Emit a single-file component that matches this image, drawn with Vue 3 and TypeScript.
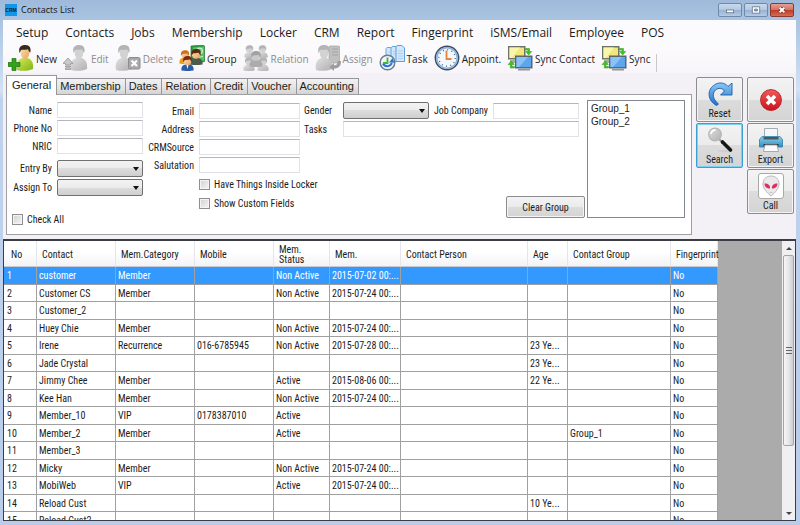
<script setup lang="ts">
import { ref } from 'vue'

interface Contact {
  no: number
  name: string
  category?: string
  mobile?: string
  status?: string
  mem?: string
  age?: string
  group?: string
}

interface Tool {
  icon: string
  label: string
  disabled?: boolean
}

const menus = ['Setup', 'Contacts', 'Jobs', 'Membership', 'Locker', 'CRM', 'Report', 'Fingerprint', 'iSMS/Email', 'Employee', 'POS']

const tools: Tool[] = [
  { icon: 'new', label: 'New' },
  { icon: 'edit', label: 'Edit', disabled: true },
  { icon: 'delete', label: 'Delete', disabled: true },
  { icon: 'group', label: 'Group' },
  { icon: 'relation', label: 'Relation', disabled: true },
  { icon: 'assign', label: 'Assign', disabled: true },
  { icon: 'task', label: 'Task' },
  { icon: 'clock', label: 'Appoint.' },
  { icon: 'sync', label: 'Sync Contact' },
  { icon: 'sync', label: 'Sync' },
]

const tabs = ['General', 'Membership', 'Dates', 'Relation', 'Credit', 'Voucher', 'Accounting']
const activeTab = ref('General')

const headers = ['No', 'Contact', 'Mem.Category', 'Mobile', 'Mem. Status', 'Mem.', 'Contact Person', 'Age', 'Contact Group', 'Fingerprint']

const contacts: Contact[] = [
  { no: 1, name: 'customer', category: 'Member', status: 'Non Active', mem: '2015-07-02 00:...' },
  { no: 2, name: 'Customer CS', category: 'Member', status: 'Non Active', mem: '2015-07-24 00:...' },
  { no: 3, name: 'Customer_2' },
  { no: 4, name: 'Huey Chie', category: 'Member', status: 'Non Active', mem: '2015-07-24 00:...' },
  { no: 5, name: 'Irene', category: 'Recurrence', mobile: '016-6785945', status: 'Non Active', mem: '2015-07-28 00:...', age: '23 Ye...' },
  { no: 6, name: 'Jade Crystal', age: '23 Ye...' },
  { no: 7, name: 'Jimmy Chee', category: 'Member', status: 'Active', mem: '2015-08-06 00:...', age: '22 Ye...' },
  { no: 8, name: 'Kee Han', category: 'Member', status: 'Non Active', mem: '2015-07-24 00:...' },
  { no: 9, name: 'Member_10', category: 'VIP', mobile: '0178387010', status: 'Active' },
  { no: 10, name: 'Member_2', category: 'Member', status: 'Active', group: 'Group_1' },
  { no: 11, name: 'Member_3' },
  { no: 12, name: 'Micky', category: 'Member', status: 'Non Active', mem: '2015-07-24 00:...' },
  { no: 13, name: 'MobiWeb', category: 'VIP', status: 'Active', mem: '2015-07-24 00:...' },
  { no: 14, name: 'Reload Cust', age: '10 Ye...' },
  { no: 15, name: 'Reload Cust2' },
]
const selectedNo = ref(1)
</script>

<template>
  <div class="window">
    <svg class="defs" width="0" height="0" aria-hidden="true">
      <defs>
        <linearGradient id="lime" x1="0" y1="0" x2="1" y2="1">
          <stop offset="0" stop-color="#d9ea5c" />
          <stop offset="1" stop-color="#7db512" />
        </linearGradient>
        <linearGradient id="silver" x1="0" y1="0" x2="1" y2="1">
          <stop offset="0" stop-color="#e0e0e0" />
          <stop offset="1" stop-color="#b0b0b0" />
        </linearGradient>
        <linearGradient id="skin" x1="0" y1="0" x2="1" y2="1">
          <stop offset="0" stop-color="#fde0b4" />
          <stop offset="1" stop-color="#e8a45c" />
        </linearGradient>
        <linearGradient id="azure" x1="0" y1="0" x2="0" y2="1">
          <stop offset="0" stop-color="#8cc8f5" />
          <stop offset="1" stop-color="#1f6fc8" />
        </linearGradient>
        <linearGradient id="teal" x1="0" y1="0" x2="0" y2="1">
          <stop offset="0" stop-color="#8fd0ea" />
          <stop offset="1" stop-color="#2f8fbf" />
        </linearGradient>
        <linearGradient id="ruby" x1="0" y1="0" x2="0" y2="1">
          <stop offset="0" stop-color="#ef5a5a" />
          <stop offset="1" stop-color="#c8141c" />
        </linearGradient>
        <symbol id="person" viewBox="0 0 18 26">
          <path class="body" d="M1 25C0 18 1.500 14.500 6.500 13h5c4.500 1.500 6 5 5.500 11-5 2-11 2.500-16 1z" />
          <path class="face" d="M4.500 6c0-6 9-6 9 0 0 5-2 8-4.500 8s-4.500-3-4.500-8z" />
          <path class="hair" d="M3.500 8C2 1 6 0 9.500 0c4 0 6 3 4.800 7.500C13 7 12.500 5 12 4.200 9 5 6 4.500 5 5c-.5 1-.7 2-1.500 3z" />
        </symbol>
        <symbol id="bust" viewBox="0 0 14 16">
          <path class="body" d="M.5 15.500C0 12 1.500 9.500 5 9h4c3.500.5 5 3 4.500 6.500-4 .8-9 .8-13 0z" />
          <circle class="face" cx="7" cy="5.500" r="4.200" />
          <path class="hair" d="M2.500 6.500C1.500 1.500 4 0 7.500 0s5 2.500 4 6.500C10.500 6 10.500 4.500 9.500 3.800 7.500 4.500 5 4 4 4.500c-.5.500-.7 1.300-1.500 2z" />
        </symbol>
      </defs>
    </svg>

    <header class="titlebar">
      <span class="logo">CRM</span>
      <h1>Contacts List</h1>
      <div class="controls">
        <button type="button" aria-label="Minimize"><svg viewBox="0 0 24 12"><rect x="8" y="6" width="8" height="3" fill="#fff" stroke="#54677f" stroke-width=".8" /></svg></button>
        <button type="button" aria-label="Maximize"><svg viewBox="0 0 24 12"><path fill="#fff" fill-rule="evenodd" stroke="#54677f" stroke-width=".8" d="M8 2.500h8v7H8zM10.500 5v2h3V5z" /></svg></button>
        <button type="button" class="close" aria-label="Close"><svg viewBox="0 0 24 12"><path d="M9.500 3.500l5 5m0-5l-5 5" stroke="#6b2a25" stroke-width="3.600" /><path d="M9.500 3.500l5 5m0-5l-5 5" stroke="#fff" stroke-width="2.200" /></svg></button>
      </div>
    </header>

    <div class="client">
      <nav class="menu">
        <a v-for="m in menus" :key="m" href="#">{{ m }}</a>
      </nav>

      <div class="toolbar">
        <button v-for="t in tools" :key="t.label" type="button" :disabled="t.disabled">
          <svg viewBox="0 0 26 26" aria-hidden="true">
            <template v-if="t.icon === 'new'">
              <use href="#person" class="green" x="8" y="0" width="18" height="26" />
              <path d="M4 13.500h4v4h4v4H8v4H4v-4H0v-4h4z" fill="#35a01c" stroke="#1c7410" stroke-width=".7" />
            </template>
            <template v-else-if="t.icon === 'edit'">
              <use href="#person" class="grey" x="7" y="0" width="18" height="26" />
              <path d="M5 13l5 5.500H7.500V20h-5v-1.500H0zM2.500 21h5v1h-5zM2.500 23h5v1.500h-5z" fill="#c9c9c9" stroke="#8f8f8f" stroke-width=".7" />
            </template>
            <template v-else-if="t.icon === 'delete'">
              <use href="#person" class="grey" x="0" y="0" width="18" height="26" />
              <rect x="13.500" y="12.500" width="11.500" height="11.500" rx="1.500" fill="#a9a9a9" stroke="#8c8c8c" />
              <path d="M16.500 15.500l5.500 5.500m0-5.500L16.500 21" stroke="#fff" stroke-width="2.200" />
            </template>
            <template v-else-if="t.icon === 'group'">
              <path d="M12 1l12-1 1.500 1v15.500L14 19l-2-1z" fill="#2c9a40" stroke="#1d7c33" stroke-width=".7" />
              <path d="M14 2.500l11-1v14l-11 2z" fill="#58c266" />
              <circle cx="20.500" cy="6" r="2.800" fill="none" stroke="#c9f0cc" stroke-width="1.300" />
              <path d="M18 12.500l6-1" stroke="#c9f0cc" />
              <use href="#bust" class="amber" x="0" y="5" width="12" height="14" />
              <use href="#bust" class="red" x="10" y="4" width="14" height="16" />
              <use href="#bust" class="blue" x="2" y="11" width="13" height="15" />
              <path d="M7.500 20l1 4 1-4z" fill="#fff" />
            </template>
            <template v-else-if="t.icon === 'relation'">
              <use href="#bust" class="grey" x="1" y="0" width="11" height="13" />
              <use href="#bust" class="grey" x="14" y="0" width="11" height="13" />
              <use href="#bust" class="grey" x="0" y="12" width="12" height="14" />
              <use href="#bust" class="grey" x="14" y="12" width="12" height="14" />
              <use href="#bust" class="ash" x="6" y="6" width="14" height="16" />
            </template>
            <template v-else-if="t.icon === 'assign'">
              <rect x="14" y="1" width="10.500" height="17" rx="1" fill="#c0c0c0" stroke="#a5a5a5" stroke-width=".7" />
              <path d="M17 4h6M17 7h6M17 10h6" stroke="#a4a4a4" />
              <use href="#person" class="grey" x="0" y="0" width="18" height="26" />
              <path d="M14.500 22l4.500-4v2.300c3 0 3.500-1.300 3.500-4.300H26c0 5.500-2.500 7.500-7 7.500V26z" fill="#9d9d9d" />
            </template>
            <template v-else-if="t.icon === 'task'">
              <path d="M7 3.500l1-1h4.500L15 5v12H7z" fill="#d4e8fc" stroke="#5b9edd" stroke-width=".9" />
              <path d="M12 2.500l1-1h5L20.500 4v12.500H12z" fill="#cfe5fc" stroke="#5b9edd" stroke-width=".9" />
              <path d="M17 1.500l1-1h5L25.500 3v13.500H17z" fill="#d4e8fc" stroke="#4f95d8" stroke-width=".9" />
              <path d="M19 6h5M19 8.500h5M19 11h5M19 13.500h5M14 6.500h2M14 9h2M9 7h2" stroke="#9cc8f2" stroke-width=".8" />
              <circle cx="8.500" cy="17.500" r="7.300" fill="#eef6fb" stroke="#6d7c88" stroke-width="1.500" />
              <path d="M4 18.500a4.800 4.800 0 0 0 8.800-.5" fill="none" stroke="#2875d6" stroke-width="2" />
              <path d="M10 17.500l3.500-4.500 2 4.800z" fill="#2875d6" />
              <path d="M8.500 12.500v5.500H4" fill="none" stroke="#45b52e" stroke-width="1.800" />
            </template>
            <template v-else-if="t.icon === 'clock'">
              <circle cx="13" cy="13" r="11.600" fill="#f3f8fd" stroke="#3a4d66" stroke-width="1.600" />
              <circle cx="13" cy="13" r="10.200" fill="none" stroke="#8fb2da" stroke-width="1.600" />
              <circle cx="13" cy="13" r="8.200" fill="none" stroke="#59708c" stroke-width="1.400" stroke-dasharray="1 3.290" />
              <path d="M12.500 5.500v8.500h5" fill="none" stroke="#e8843c" stroke-width="1.800" />
            </template>
            <template v-else>
              <rect x="1" y="1" width="17.500" height="13.500" fill="#6d7466" />
              <rect x="2.500" y="2.500" width="14.500" height="10.500" fill="#f1e77a" />
              <path d="M2.500 2.500H13L5 13H2.500z" fill="#faf5ac" />
              <path d="M3 15h5v3H3z" fill="#a8aca4" />
              <rect x="8" y="10.500" width="17.500" height="13" fill="#5b6670" />
              <rect x="9.500" y="12" width="14.500" height="10" fill="#5ba6ec" />
              <path d="M9.500 12H21l-9 10H9.500z" fill="#8cc3f6" />
              <path d="M11 24h12v1.500H11z" fill="#8f959b" />
              <path d="M18.500 3.500h4v3h2.200L21.700 10l-3-3.500h2.300V5h-2.500zM7.500 23H3.300v-3.500H1L4.300 16l3 3.500H5v2h2.500z" fill="#3fc51f" stroke="#2c9a14" stroke-width=".5" />
            </template>
          </svg>
          <span>{{ t.label }}</span>
        </button>
        <i class="divider"></i>
      </div>

      <div class="workspace">
        <div class="filters">
          <div class="tabs" role="tablist">
            <button
              v-for="t in tabs"
              :key="t"
              type="button"
              role="tab"
              :aria-selected="t === activeTab"
              :class="{ active: t === activeTab }"
              @click="activeTab = t"
            >{{ t }}</button>
          </div>
          <form class="panel" @submit.prevent>
            <div class="col first">
              <div class="fields">
                <label for="name">Name</label><input id="name" type="text" />
                <label for="phone">Phone No</label><input id="phone" type="text" />
                <label for="nric">NRIC</label><input id="nric" type="text" />
                <label for="entry" class="low">Entry By</label>
                <span class="drop low"><select id="entry"><option></option></select></span>
                <label for="assign">Assign To</label>
                <span class="drop"><select id="assign"><option></option></select></span>
              </div>
              <label class="check all"><input type="checkbox" />Check All</label>
            </div>
            <div class="col second">
              <div class="fields">
                <label for="email">Email</label><input id="email" type="text" />
                <label for="address">Address</label><input id="address" type="text" />
                <label for="source">CRMSource</label><input id="source" type="text" />
                <label for="salutation">Salutation</label><input id="salutation" type="text" />
                <label class="check"><input type="checkbox" />Have Things Inside Locker</label>
                <label class="check"><input type="checkbox" />Show Custom Fields</label>
              </div>
            </div>
            <div class="col third">
              <div class="fields">
                <label for="gender">Gender</label>
                <span class="drop"><select id="gender"><option></option></select></span>
                <label for="company">Job Company</label><input id="company" type="text" />
                <label for="tasks">Tasks</label><input id="tasks" class="wide" type="text" />
              </div>
              <button type="button" class="btn clear">Clear Group</button>
            </div>
            <select class="groups" size="2" aria-label="Groups">
              <option>Group_1</option>
              <option>Group_2</option>
            </select>
          </form>
        </div>

        <div class="actions">
          <button type="button" class="btn">
            <svg viewBox="0 0 28 28" aria-hidden="true"><path d="M10.500 25.500C2 21 .5 11 7.500 5.500c5-4 11.500-3 14.500 1L26 3v12H14.500l4-4c-2-3-6-3.500-9-1-3.500 3.500-3 9 3 14z" fill="url(#azure)" stroke="#1c5cae" stroke-width=".9" /></svg>
            Reset
          </button>
          <button type="button" class="btn" aria-label="Cancel">
            <svg viewBox="0 0 28 28" aria-hidden="true"><circle cx="14" cy="14" r="10.500" fill="url(#ruby)" stroke="#b51a20" stroke-width=".8" /><path d="M10 10l8 8m0-8l-8 8" stroke="#fff" stroke-width="3.600" /></svg>
          </button>
          <button type="button" class="btn default">
            <svg viewBox="0 0 28 28" aria-hidden="true">
              <ellipse cx="19" cy="25" rx="7" ry="1.500" fill="#cfcfcf" />
              <path d="M13 13l3.500 3.500" stroke="#9d9d9d" stroke-width="2" />
              <path d="M16.500 16l8 8" stroke="#161616" stroke-width="3.600" stroke-linecap="round" />
              <circle cx="9" cy="8.500" r="6.300" fill="url(#silver)" stroke="#b5b5b5" stroke-width="1.200" />
              <path d="M5 8a4.500 4.500 0 0 1 4.500-4" fill="none" stroke="#fff" stroke-width="1.800" />
            </svg>
            Search
          </button>
          <button type="button" class="btn">
            <svg viewBox="0 0 28 28" aria-hidden="true">
              <path d="M7.500 2.500h13V12h-13z" fill="#f4f6f8" stroke="#9aa3ab" stroke-width=".9" />
              <path d="M5 10.500h18l2.500 3V21h-23v-7.500z" fill="url(#teal)" stroke="#2b7fa8" stroke-width=".8" />
              <path d="M6.500 11h15v2.500h-15z" fill="#4a5862" />
              <path d="M6.500 18h15v2.500h-15z" fill="#2a343d" />
              <path d="M8 19h12l1.500 6.500h-15z" fill="#fafbfc" stroke="#9aa3ab" stroke-width=".9" />
            </svg>
            Export
          </button>
          <button type="button" class="btn last">
            <svg viewBox="0 0 28 28" aria-hidden="true">
              <rect x="1.500" y="1.500" width="25" height="25" rx="2.500" fill="#fff" stroke="#a8a8a8" />
              <path d="M14 4c5 0 8 3.500 8 8 0 4-3.500 8.500-8 12-4.500-3.500-8-8-8-12 0-4.500 3-8 8-8z" fill="#e9e9ec" stroke="#b8b8bd" />
              <path d="M7.500 11.500c4 0 6 2 5.500 5-3.500 0-5.500-2-5.500-5zM20.500 11.500c-4 0-6 2-5.500 5 3.500 0 5.500-2 5.500-5z" fill="#de2f62" />
              <path d="M12.500 20.500h3" stroke="#c4c4c8" />
            </svg>
            Call
          </button>
        </div>
      </div>

      <div class="grid">
        <div class="sheet">
          <table>
            <colgroup>
              <col v-for="h in headers" :key="h" />
            </colgroup>
            <thead>
              <tr><th v-for="h in headers" :key="h" scope="col">{{ h }}</th></tr>
            </thead>
            <tbody>
              <tr v-for="c in contacts" :key="c.no" :class="{ selected: c.no === selectedNo }" @click="selectedNo = c.no">
                <td>{{ c.no }}</td>
                <td>{{ c.name }}</td>
                <td>{{ c.category }}</td>
                <td>{{ c.mobile }}</td>
                <td>{{ c.status }}</td>
                <td>{{ c.mem }}</td>
                <td></td>
                <td>{{ c.age }}</td>
                <td>{{ c.group }}</td>
                <td>No</td>
              </tr>
            </tbody>
          </table>
        </div>
        <div class="scroll">
          <button type="button" aria-label="Scroll up"><i class="up"></i></button>
          <div class="track"><div class="thumb"><i></i></div></div>
          <button type="button" aria-label="Scroll down"><i class="down"></i></button>
        </div>
      </div>
    </div>
  </div>
</template>

<style>
body {
  margin: 0;
}
</style>

<style scoped>
* {
  box-sizing: border-box;
}

.window {
  display: flex;
  flex-direction: column;
  height: 100vh;
  padding: 0 4px 4px 3px;
  background: linear-gradient(#9fb9da, #a9c3e2 20px, #d3e2f4 90px, #bfd3ee 100px, #b9cdea);
  font-family: "Roboto Condensed", Roboto, "Liberation Sans", sans-serif;
  font-size: 10px;
  color: #1c1c1c;
  overflow: hidden;
}

.defs {
  position: absolute;
}

button,
input,
select {
  font: inherit;
  color: inherit;
  margin: 0;
}

/* Title bar */
.titlebar {
  flex: none;
  display: flex;
  align-items: center;
  height: 20px;
  padding: 0 2px;
}

.logo {
  width: 12px;
  height: 12px;
  background: #1296e8;
  color: #06243c;
  font: bold 5px/12px "Liberation Sans", sans-serif;
  text-align: center;
}

h1 {
  flex: 1;
  margin: 0 0 0 4px;
  font: 9px/20px "Open Sans", "Noto Sans", sans-serif;
  color: #111;
}

.controls {
  display: flex;
  gap: 2px;
}

.controls button {
  width: 24px;
  height: 14px;
  padding: 0;
  border: 1px solid #6f89a8;
  border-radius: 2px;
  background: linear-gradient(#c9d9ec, #b3c8e1 50%, #96b1d0 50%, #b4cbe4);
}

.controls svg {
  display: block;
  width: 22px;
  height: 12px;
}

.controls .close {
  border-color: #8a3a34;
  background: linear-gradient(#e3a196, #d4705f 50%, #bd3b26 50%, #d66b50);
}

.client {
  flex: 1;
  min-height: 0;
  display: flex;
  flex-direction: column;
  background: #f3f1f6;
}

/* Menu and toolbar */
.menu {
  flex: none;
  display: flex;
  gap: 17px;
  height: 24px;
  padding: 0 13px;
  background: #fbfafc;
  font: 12px/25px "Open Sans", "Noto Sans", sans-serif;
}

.menu a {
  color: #1c1c1c;
  text-decoration: none;
}

.toolbar {
  flex: none;
  display: flex;
  gap: 6px;
  height: 29px;
  padding: 1px 5px 0;
  background: linear-gradient(#fcfbfd, #f7f5f9);
  font: 10px/28px "Open Sans", "Noto Sans", sans-serif;
}

.toolbar button {
  display: flex;
  gap: 2px;
  padding: 0;
  border: 0;
  background: none;
  white-space: nowrap;
}

.toolbar button:disabled {
  color: #8c8c8c;
}

.toolbar svg {
  flex: none;
  width: 26px;
  height: 26px;
}

.divider {
  width: 1px;
  height: 18px;
  margin-top: 9px;
  background: #c9c7cc;
}

.body { fill: var(--body); }
.face { fill: var(--face, url(#skin)); }
.hair { fill: var(--hair, #3a2a1e); }
.green { --body: url(#lime); }
.grey { --body: url(#silver); --face: #d2d2d2; --hair: #b4b4b4; }
.ash { --body: #acacac; --face: #cacaca; --hair: #a2a2a2; }
.amber { --body: #e6a01e; --hair: #d0701c; }
.red { --body: #4c5a4a; --hair: #5a2a14; }
.blue { --body: #2a5ca8; --hair: #7c2c12; }

/* Filters */
.workspace {
  flex: none;
  display: flex;
  gap: 4px;
  padding: 2px 2px 4px 3px;
}

.filters {
  flex: 1;
  min-width: 0;
}

.tabs {
  display: flex;
  align-items: flex-end;
  height: 19px;
  font: 11px/15px "Liberation Sans", Arial, sans-serif;
}

.tabs button {
  height: 16px;
  padding: 0 4px 0 3px;
  border: 1px solid #97979b;
  border-left-width: 0;
  border-bottom: 0;
  background: linear-gradient(#f1f1f1, #e6e6e6 50%, #d4d4d4);
}

.tabs button.active {
  height: 20px;
  margin-bottom: -1px;
  padding: 0 5px;
  border-left-width: 1px;
  background: #fff;
}

.panel {
  display: flex;
  height: 141px;
  padding: 5px 6px 0 0;
  border: 1px solid #a0a0a4;
  background: #fff;
}

.fields {
  display: grid;
  gap: 2px 5px;
  align-items: center;
}

.fields label {
  text-align: right;
  white-space: nowrap;
}

.fields input[type="text"] {
  width: 100%;
  min-width: 0;
  height: 16px;
  padding: 0 2px;
  border: 1px solid #e0e2e8;
  border-top-color: #b4b6bc;
  background: #fff;
}

.first {
  padding-top: 2px;
}

.first .fields {
  grid-template: 16px 16px 16px 21px 17px / 45px 86px;
}

.second {
  padding: 3px 0 0 3px;
}

.second .fields {
  grid-template: repeat(4, 16px) 18px 16px / 48px 101px;
}

.third {
  flex: 1;
  display: flex;
  flex-direction: column;
  justify-content: space-between;
  height: 118px;
  padding: 2px 2px 0 4px;
}

.third .fields {
  grid-template: 17px 16px / 34px 86px 54px minmax(40px, 1fr);
  padding-right: 6px;
}

.third .fields label {
  text-align: left;
}

.fields .wide {
  grid-column: 2 / -1;
}

.fields .low {
  align-self: end;
}

label.low {
  line-height: 17px;
}

.drop {
  position: relative;
  display: block;
  height: 17px;
}

.drop select {
  display: block;
  width: 100%;
  height: 17px;
  padding: 0 4px;
  appearance: none;
  border: 1px solid #707070;
  border-radius: 2px;
  background: linear-gradient(#f2f2f2, #ebebeb 50%, #dddddd 50%, #cfcfcf);
}

.drop::after {
  content: "";
  position: absolute;
  right: 4px;
  top: 7px;
  border: 3px solid transparent;
  border-top: 4px solid #111;
  border-bottom: 0;
  pointer-events: none;
}

.check {
  display: flex;
  align-items: center;
  gap: 4px;
}

.fields .check {
  grid-column: 2;
  width: max-content;
}

.check.all {
  margin: 18px 0 0 5px;
}

.check input {
  appearance: none;
  width: 11px;
  height: 11px;
  border: 1px solid #8e8f8f;
  background: linear-gradient(135deg, #cfd1d4, #f6f6f6);
  box-shadow: inset 0 0 0 1px #f4f4f4;
}

.btn {
  border: 1px solid #8c8c90;
  border-radius: 2px;
  background: linear-gradient(#f3f3f3, #ebebeb 50%, #dcdcdc 50%, #d4d4d4);
  box-shadow: inset 0 0 0 1px #f4f4f4;
}

.clear {
  align-self: flex-end;
  width: 79px;
  height: 22px;
  padding: 0;
}

.groups {
  width: 98px;
  height: 118px;
  padding: 2px 2px;
  border: 1px solid #828790;
  border-radius: 0;
  background: #fff;
  overflow: hidden;
  font: 10px/13px "Liberation Sans", Arial, sans-serif;
}

.groups option {
  min-height: 13px;
  padding: 0 0 0 1px;
}

/* Action buttons */
.actions {
  display: grid;
  grid-template-columns: 47px 47px;
  grid-auto-rows: 45px;
  gap: 1px 4px;
  padding-top: 2px;
}

.actions .btn {
  display: flex;
  flex-direction: column;
  align-items: center;
  justify-content: center;
  padding: 0;
  line-height: 12px;
}

.actions svg {
  width: 28px;
  height: 28px;
}

.actions .default {
  border-color: #3c9fd0;
  box-shadow: inset 0 0 0 1px #7cd0f2;
}

.actions .last {
  grid-column: 2;
}

/* Contact grid */
.grid {
  flex: 1;
  min-height: 0;
  display: flex;
  border: 1px solid #3c3c44;
  border-top-width: 2px;
  background: #ababab;
}

.sheet {
  flex: 1;
  overflow: hidden;
}

table {
  width: 714px;
  table-layout: fixed;
  border-collapse: separate;
  border-spacing: 0;
  line-height: 11px;
}

col:nth-child(1) { width: 33px; }
col:nth-child(2),
col:nth-child(3),
col:nth-child(4) { width: 79px; }
col:nth-child(5) { width: 56px; }
col:nth-child(6) { width: 71px; }
col:nth-child(7) { width: 127px; }
col:nth-child(8) { width: 40px; }
col:nth-child(9) { width: 103px; }
col:nth-child(10) { width: 47px; }

th {
  height: 26px;
  padding: 2px 0 0 5px;
  border-right: 1px solid #e4e6ec;
  border-bottom: 1px solid #c8cad0;
  background: linear-gradient(#fff, #fff 45%, #f2f3f8);
  font-weight: normal;
  text-align: left;
  line-height: 10px;
}

th:first-child {
  padding-left: 7px;
}

th:nth-child(5) {
  padding-right: 20px;
}

td {
  height: 18px;
  padding: 0 0 0 2px;
  border-right: 1px solid #a0a0a0;
  border-bottom: 1px solid #a0a0a0;
  background: #fff;
  white-space: nowrap;
  overflow: hidden;
}

td:first-child {
  padding-left: 3px;
}

tr:nth-child(even) td {
  height: 17px;
}

.selected td {
  background: #3399ff;
  color: #fff;
}

.scroll {
  flex: none;
  display: flex;
  flex-direction: column;
  width: 13px;
  background: #f0eff1;
}

.scroll button {
  display: grid;
  place-items: center;
  height: 14px;
  padding: 0;
  border: 0;
  background: none;
}

.up,
.down {
  border: 3px solid transparent;
}

.up {
  border-top: 0;
  border-bottom: 3px solid #444;
}

.down {
  border-bottom: 0;
  border-top: 3px solid #444;
}

.track {
  flex: 1;
  padding: 0 1px;
}

.thumb {
  display: grid;
  place-items: center;
  height: 76%;
  border: 1px solid #a4a4a8;
  border-radius: 2px;
  background: linear-gradient(90deg, #f6f6f7, #e6e6e8 50%, #cfcfd3);
}

.thumb i {
  width: 6px;
  height: 7px;
  background: repeating-linear-gradient(#66666a 0 1px, transparent 1px 3px);
}
</style>
